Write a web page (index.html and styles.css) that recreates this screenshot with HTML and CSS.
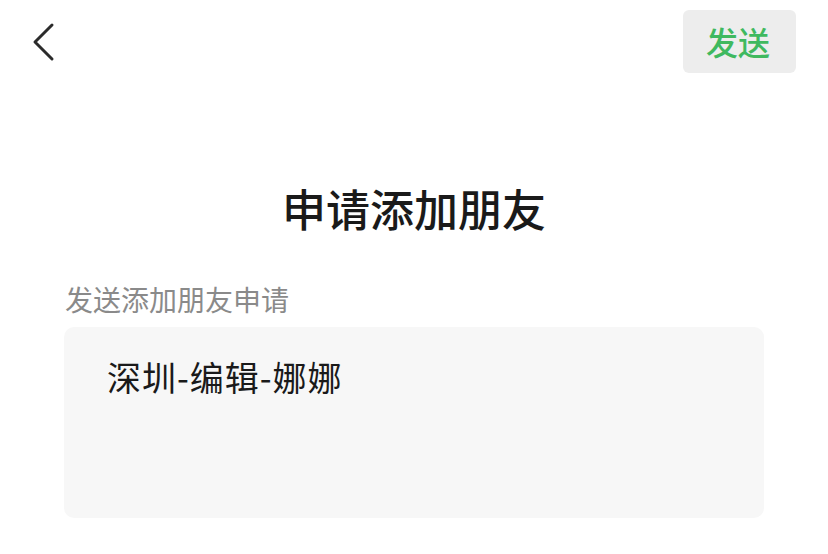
FILE: index.html
```html
<!DOCTYPE html>
<html lang="zh-CN">
<head>
<meta charset="utf-8">
<title>申请添加朋友</title>
<link rel="stylesheet" href="styles.css">
</head>
<body>
<div class="page">
  <header class="topbar">
    <button class="back" aria-label="返回">
      <svg width="24" height="40" viewBox="0 0 24 40">
        <polyline points="20,3 3,20 20,37" fill="none" stroke="#2b2b2b" stroke-width="3" stroke-linecap="round" stroke-linejoin="round"/>
      </svg>
    </button>
    <button class="send">发送</button>
  </header>
  <h1 class="title">申请添加朋友</h1>
  <div class="field">
    <div class="label">发送添加朋友申请</div>
    <div class="box">深圳-编辑-娜娜</div>
  </div>
</div>
</body>
</html>
```
FILE: styles.css
```css
html, body {
  margin: 0;
  padding: 0;
  background: #ffffff;
}
body {
  font-family: "Noto Sans CJK SC", "Noto Sans", sans-serif;
  width: 828px;
  height: 554px;
  overflow: hidden;
}
.page {
  display: flex;
  flex-direction: column;
}
.topbar {
  display: flex;
  justify-content: space-between;
  align-items: flex-start;
  padding: 10px 32px 0 32px;
  height: 64px;
}
.back {
  border: none;
  background: none;
  padding: 0;
  margin-top: 12px;
  width: 24px;
  height: 40px;
  display: flex;
}
.send {
  border: none;
  background: #ededed;
  color: #3fb95f;
  font-family: inherit;
  font-size: 32px;
  font-weight: 500;
  line-height: 63px;
  height: 63px;
  width: 113px;
  border-radius: 6px;
  padding: 0 3px 0 0;
  text-align: center;
}
.title {
  margin: 112px 0 0 0;
  font-size: 44px;
  line-height: 44px;
  font-weight: 500;
  text-align: center;
  color: #1a1a1a;
}
.field {
  margin: 56px 64px 0 64px;
  display: flex;
  flex-direction: column;
}
.label {
  font-size: 28px;
  line-height: 28px;
  color: #8a8a8a;
  padding-left: 1px;
  margin-top: -1px;
}
.box {
  margin-top: 14px;
  height: 191px;
  background: #f7f7f7;
  border-radius: 10px;
  box-sizing: border-box;
  padding: 33px 0 0 43px;
  font-size: 34px;
  line-height: 34px;
  letter-spacing: 1px;
  color: #1a1a1a;
}
```
